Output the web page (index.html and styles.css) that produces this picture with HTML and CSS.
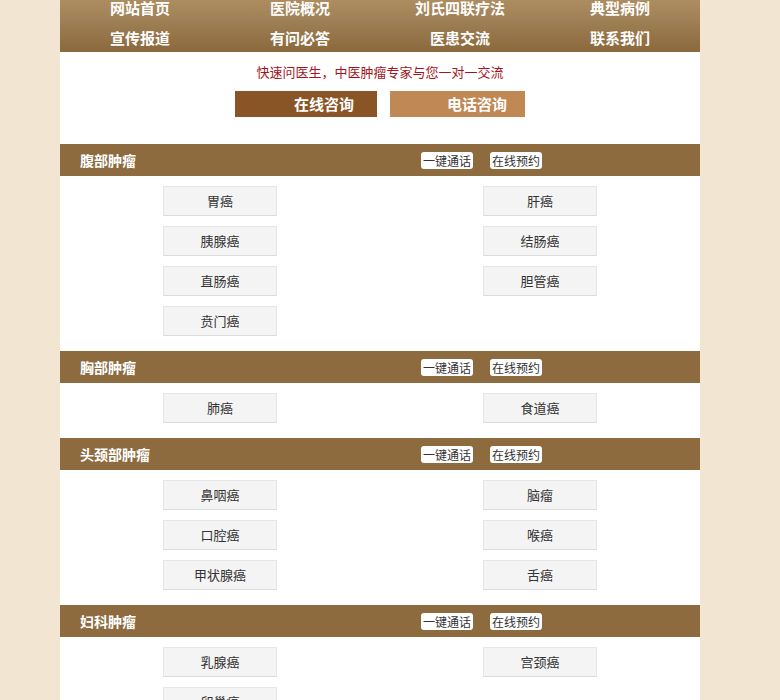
FILE: index.html
```html
<!DOCTYPE html>
<html lang="zh-CN">
<head>
    <meta charset="UTF-8">
    <meta name="viewport" content="width=device-width, initial-scale=1.0">
    <title>中医肿瘤 - 快速问医生</title>
    <link rel="stylesheet" href="styles.css">
</head>
<body>
    <div id="wrap">
        <!-- Top Navigation -->
        <ul id="nav">
            <li><a href="#">网站首页</a></li>
            <li><a href="#">医院概况</a></li>
            <li><a href="#">刘氏四联疗法</a></li>
            <li><a href="#">典型病例</a></li>
            <li><a href="#">宣传报道</a></li>
            <li><a href="#">有问必答</a></li>
            <li><a href="#">医患交流</a></li>
            <li><a href="#">联系我们</a></li>
        </ul>

        <!-- Consult -->
        <div id="consult">
            <p class="tagline">快速问医生，中医肿瘤专家与您一对一交流</p>
            <div class="consult-btns">
                <a class="consult-btn online" href="#">在线咨询</a>
                <a class="consult-btn phone" href="#">电话咨询</a>
            </div>
        </div>

        <!-- Cancer Categories -->
        <div class="section">
            <div class="section-head">
                <span class="section-title">腹部肿瘤</span>
                <a class="badge" href="#">一键通话</a>
                <a class="badge" href="#">在线预约</a>
            </div>
            <div class="items">
                <a class="item" href="#">胃癌</a>
                <a class="item" href="#">肝癌</a>
                <a class="item" href="#">胰腺癌</a>
                <a class="item" href="#">结肠癌</a>
                <a class="item" href="#">直肠癌</a>
                <a class="item" href="#">胆管癌</a>
                <a class="item" href="#">贲门癌</a>
            </div>
        </div>

        <div class="section">
            <div class="section-head">
                <span class="section-title">胸部肿瘤</span>
                <a class="badge" href="#">一键通话</a>
                <a class="badge" href="#">在线预约</a>
            </div>
            <div class="items">
                <a class="item" href="#">肺癌</a>
                <a class="item" href="#">食道癌</a>
            </div>
        </div>

        <div class="section">
            <div class="section-head">
                <span class="section-title">头颈部肿瘤</span>
                <a class="badge" href="#">一键通话</a>
                <a class="badge" href="#">在线预约</a>
            </div>
            <div class="items">
                <a class="item" href="#">鼻咽癌</a>
                <a class="item" href="#">脑瘤</a>
                <a class="item" href="#">口腔癌</a>
                <a class="item" href="#">喉癌</a>
                <a class="item" href="#">甲状腺癌</a>
                <a class="item" href="#">舌癌</a>
            </div>
        </div>

        <div class="section">
            <div class="section-head">
                <span class="section-title">妇科肿瘤</span>
                <a class="badge" href="#">一键通话</a>
                <a class="badge" href="#">在线预约</a>
            </div>
            <div class="items">
                <a class="item" href="#">乳腺癌</a>
                <a class="item" href="#">宫颈癌</a>
                <a class="item" href="#">卵巢癌</a>
            </div>
        </div>
    </div>
</body>
</html>
```

FILE: styles.css
```css
/* General Page Styling */
body, html {
    margin: 0;
    padding: 0;
}
body {
    background-color: #f2e6d3;
    font-family: "Noto Sans CJK SC", "Microsoft YaHei", sans-serif;
    overflow: hidden;
}
a {
    text-decoration: none;
}
#wrap {
    width: 640px;
    margin: 0 0 0 60px;
    background-color: #fff;
    min-height: 800px;
}

/* Top Navigation */
#nav {
    list-style: none;
    margin: -8px 0 0 0;
    padding: 0;
    height: 60px;
    display: grid;
    grid-template-columns: repeat(4, 1fr);
    background: linear-gradient(to bottom, #b39364, #a08056 45%, #8a693c);
}
#nav li {
    height: 30px;
    line-height: 30px;
    text-align: center;
}
#nav a {
    color: #fff;
    font-size: 15px;
    font-weight: bold;
}

/* Consult Area */
#consult {
    padding: 10px 0 27px;
    text-align: center;
}
.tagline {
    margin: 0;
    font-size: 13px;
    line-height: 20px;
    color: #a3151c;
}
.consult-btns {
    margin-top: 9px;
    display: flex;
    justify-content: center;
    gap: 13px;
}
.consult-btn {
    height: 26px;
    line-height: 26px;
    color: #fff;
    font-size: 15px;
    font-weight: bold;
    text-align: left;
    box-sizing: border-box;
}
.consult-btn.online {
    width: 142px;
    padding-left: 59px;
    background-color: #8a5526;
}
.consult-btn.phone {
    width: 135px;
    padding-left: 57px;
    background-color: #c08855;
}

/* Sections */
.section-head {
    height: 32px;
    display: flex;
    align-items: center;
    padding-left: 20px;
    background-color: #8d6b3f;
}
.section-title {
    flex: 0 0 341px;
    color: #fff;
    font-size: 14px;
    font-weight: bold;
}
.badge {
    height: 17px;
    line-height: 17px;
    padding: 0 2px;
    margin-right: 17px;
    background-color: #fff;
    border-radius: 3px;
    color: #333;
    font-size: 12px;
}
.items {
    display: grid;
    grid-template-columns: repeat(2, 1fr);
    row-gap: 10px;
    padding: 10px 0 15px;
    justify-items: center;
}
.item {
    width: 114px;
    height: 30px;
    line-height: 28px;
    box-sizing: border-box;
    text-align: center;
    background-color: #f4f4f4;
    border: 1px solid #e6e6e6;
    border-bottom-color: #dcdcdc;
    color: #333;
    font-size: 13px;
}
```
